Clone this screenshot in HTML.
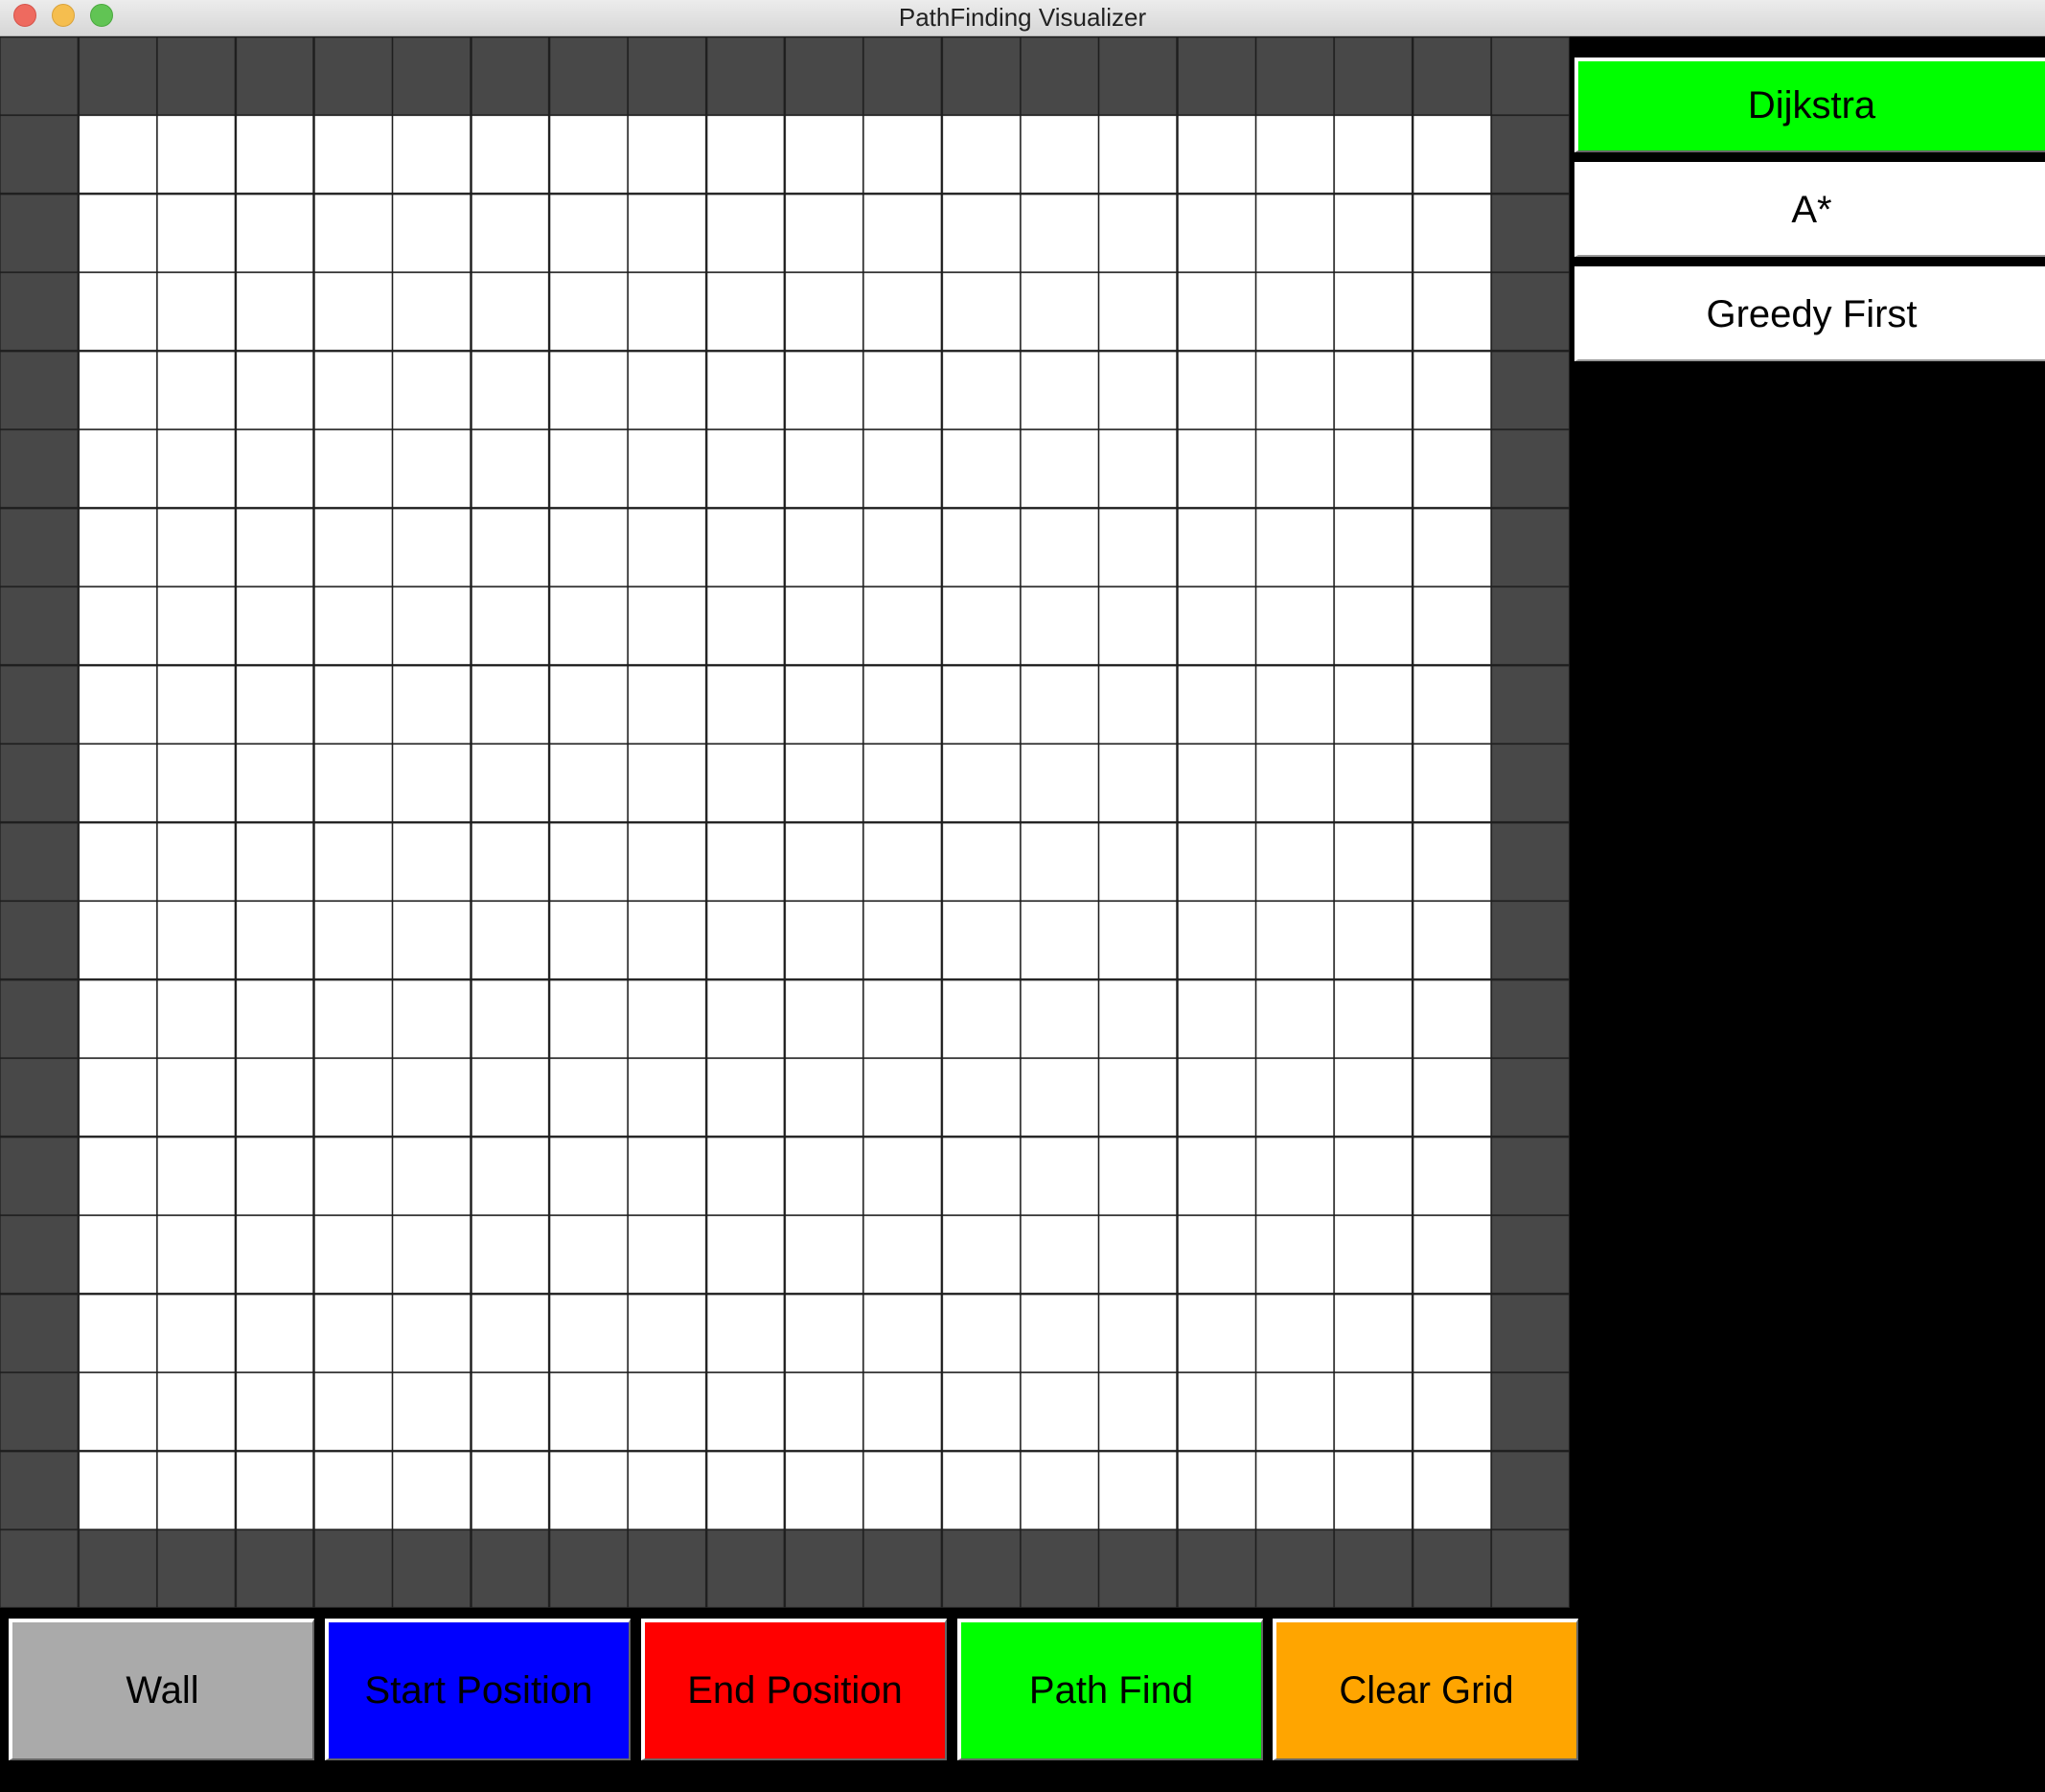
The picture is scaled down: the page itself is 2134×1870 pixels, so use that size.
<!DOCTYPE html>
<html><head><meta charset="utf-8"><style>
*{margin:0;padding:0;box-sizing:border-box}
body{width:2134px;height:1870px;background:#000;position:relative;overflow:hidden;font-family:"Liberation Sans",Arial,sans-serif}
.title{position:absolute;left:0;top:0;width:2134px;height:38px;background:linear-gradient(#ececec,#d6d6d6);border-bottom:1px solid #b0b0b0;text-align:center;font-size:26px;line-height:36px;color:#222}
.dot{position:absolute;top:4px;width:24px;height:24px;border-radius:50%}
.grid{position:absolute;left:0;top:38px;width:1638px;height:1640px;background:#484848}
.inner{position:absolute;left:82px;top:82px;width:1474px;height:1476px;background:#fff}
.lines{position:absolute;left:0;top:0;width:1638px;height:1640px;
background-image:repeating-linear-gradient(to right,#1e1e1e 0,#1e1e1e 2px,transparent 2px,transparent 81.9px),repeating-linear-gradient(to bottom,#1e1e1e 0,#1e1e1e 2px,transparent 2px,transparent 82px);background-position:-1px -1px}
.btn{position:absolute;display:flex;align-items:center;justify-content:center;font-size:40px;color:#000;border-top:4px solid #fff;border-left:4px solid #fff;border-bottom:2px solid #666;border-right:2px solid #666}
.b{top:1689px;height:148px;width:319px}
.s{left:1643px;width:491px;height:99px;border-right:none}
</style></head><body>
<div class="title">PathFinding Visualizer
<div class="dot" style="left:14px;background:#ee6a5f;border:1px solid #d5534a"></div>
<div class="dot" style="left:54px;background:#f5be4f;border:1px solid #d9a23a"></div>
<div class="dot" style="left:94px;background:#61c454;border:1px solid #4aa93e"></div>
</div>
<div class="grid"><div class="inner"></div><div class="lines"></div></div>
<div class="btn s" style="top:60px;background:#00ff00">Dijkstra</div>
<div class="btn s" style="top:169px;background:#fff;border-color:#fff #999 #999 #fff">A*</div>
<div class="btn s" style="top:278px;background:#fff;border-color:#fff #999 #999 #fff">Greedy First</div>
<div class="btn b" style="left:9px;background:#aaaaaa">Wall</div>
<div class="btn b" style="left:339px;background:#0000ff">Start Position</div>
<div class="btn b" style="left:669px;background:#ff0000">End Position</div>
<div class="btn b" style="left:999px;background:#00ff00">Path Find</div>
<div class="btn b" style="left:1328px;background:#ffa500">Clear Grid</div>
</body></html>
